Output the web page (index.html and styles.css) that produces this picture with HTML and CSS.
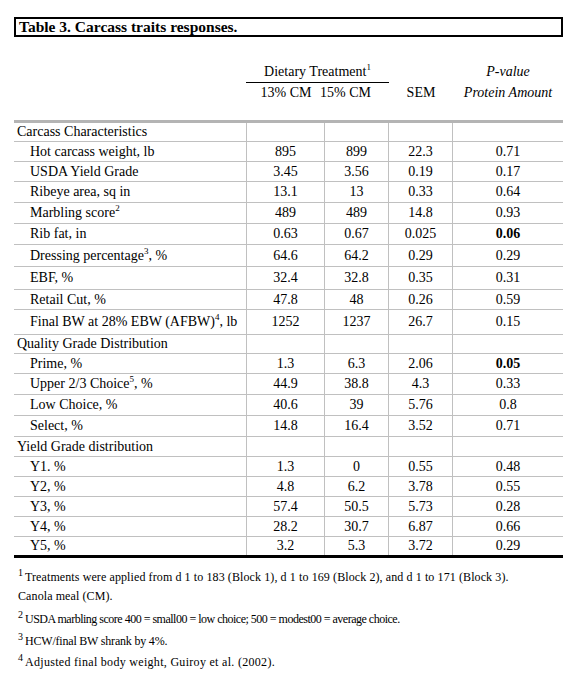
FILE: index.html
```html
<!DOCTYPE html>
<html>
<head>
<meta charset="utf-8">
<link rel="stylesheet" href="styles.css">
</head>
<body>
<div class="page">
  <div class="title">Table 3. Carcass traits responses.</div>

  <div class="head">
    <div class="hrow r1">
      <div class="hc"></div>
      <div class="hc span2">Dietary Treatment<sup>1</sup></div>
      <div class="hc"></div>
      <div class="hc it">P-value</div>
    </div>
    <div class="hrow r2">
      <div class="hc"></div>
      <div class="hc">13% CM</div>
      <div class="hc shift">15% CM</div>
      <div class="hc">SEM</div>
      <div class="hc it">Protein Amount</div>
    </div>
  </div>

  <div class="tbody">
    <div class="row h19 cat"><div class="c lab"><span>Carcass Characteristics</span></div><div class="c"></div><div class="c"></div><div class="c"></div><div class="c"></div></div>
    <div class="row h20"><div class="c lab sub"><span>Hot carcass weight, lb</span></div><div class="c">895</div><div class="c">899</div><div class="c">22.3</div><div class="c">0.71</div></div>
    <div class="row h20"><div class="c lab sub"><span>USDA Yield Grade</span></div><div class="c">3.45</div><div class="c">3.56</div><div class="c">0.19</div><div class="c">0.17</div></div>
    <div class="row h21"><div class="c lab sub"><span>Ribeye area, sq in</span></div><div class="c">13.1</div><div class="c">13</div><div class="c">0.33</div><div class="c">0.64</div></div>
    <div class="row h21"><div class="c lab sub"><span>Marbling score<sup>2</sup></span></div><div class="c">489</div><div class="c">489</div><div class="c">14.8</div><div class="c">0.93</div></div>
    <div class="row h21"><div class="c lab sub"><span>Rib fat, in</span></div><div class="c">0.63</div><div class="c">0.67</div><div class="c">0.025</div><div class="c"><b>0.06</b></div></div>
    <div class="row h22"><div class="c lab sub"><span>Dressing percentage<sup>3</sup>, %</span></div><div class="c">64.6</div><div class="c">64.2</div><div class="c">0.29</div><div class="c">0.29</div></div>
    <div class="row h23"><div class="c lab sub"><span>EBF, %</span></div><div class="c">32.4</div><div class="c">32.8</div><div class="c">0.35</div><div class="c">0.31</div></div>
    <div class="row h20"><div class="c lab sub"><span>Retail Cut, %</span></div><div class="c">47.8</div><div class="c">48</div><div class="c">0.26</div><div class="c">0.59</div></div>
    <div class="row h25"><div class="c lab sub"><span>Final BW at 28% EBW (AFBW)<sup>4</sup>, lb</span></div><div class="c">1252</div><div class="c">1237</div><div class="c">26.7</div><div class="c">0.15</div></div>
    <div class="row h19 cat"><div class="c lab"><span>Quality Grade Distribution</span></div><div class="c"></div><div class="c"></div><div class="c"></div><div class="c"></div></div>
    <div class="row h20"><div class="c lab sub"><span>Prime, %</span></div><div class="c">1.3</div><div class="c">6.3</div><div class="c">2.06</div><div class="c"><b>0.05</b></div></div>
    <div class="row h21"><div class="c lab sub"><span>Upper 2/3 Choice<sup>5</sup>, %</span></div><div class="c">44.9</div><div class="c">38.8</div><div class="c">4.3</div><div class="c">0.33</div></div>
    <div class="row h21"><div class="c lab sub"><span>Low Choice, %</span></div><div class="c">40.6</div><div class="c">39</div><div class="c">5.76</div><div class="c">0.8</div></div>
    <div class="row h21"><div class="c lab sub"><span>Select, %</span></div><div class="c">14.8</div><div class="c">16.4</div><div class="c">3.52</div><div class="c">0.71</div></div>
    <div class="row h20 cat"><div class="c lab"><span>Yield Grade distribution</span></div><div class="c"></div><div class="c"></div><div class="c"></div><div class="c"></div></div>
    <div class="row h20"><div class="c lab sub"><span>Y1. %</span></div><div class="c">1.3</div><div class="c">0</div><div class="c">0.55</div><div class="c">0.48</div></div>
    <div class="row h20"><div class="c lab sub"><span>Y2, %</span></div><div class="c">4.8</div><div class="c">6.2</div><div class="c">3.78</div><div class="c">0.55</div></div>
    <div class="row h20"><div class="c lab sub"><span>Y3, %</span></div><div class="c">57.4</div><div class="c">50.5</div><div class="c">5.73</div><div class="c">0.28</div></div>
    <div class="row h20"><div class="c lab sub"><span>Y4, %</span></div><div class="c">28.2</div><div class="c">30.7</div><div class="c">6.87</div><div class="c">0.66</div></div>
    <div class="row h20 last"><div class="c lab sub"><span>Y5, %</span></div><div class="c">3.2</div><div class="c">5.3</div><div class="c">3.72</div><div class="c">0.29</div></div>
  </div>

  <div class="notes">
    <p class="n1"><sup>1</sup>Treatments were applied from d 1 to 183 (Block 1), d 1 to 169 (Block 2), and d 1 to 171 (Block 3).<br>Canola meal (CM).</p>
    <p class="n2"><sup>2</sup>USDA marbling score 400 = small00 = low choice; 500 = modest00 = average choice.</p>
    <p class="n3"><sup>3</sup>HCW/final BW shrank by 4%.</p>
    <p class="n4"><sup>4</sup>Adjusted final body weight, Guiroy et al. (2002).</p>
  </div>
</div>
</body>
</html>
```

FILE: styles.css
```css
html, body {
  margin: 0;
  padding: 0;
  background: #ffffff;
}

body {
  font-family: "Liberation Serif", "Times New Roman", serif;
  color: #000;
}

.page {
  padding: 17px 0 0 14px;
  width: 549px;
}

.title {
  box-sizing: border-box;
  height: 20px;
  border: 2px solid #000;
  font-weight: bold;
  font-size: 15.5px;
  line-height: 16px;
  padding-left: 3px;
}

.head {
  margin-top: 25px;
  font-size: 14px;
}

.hrow,
.row {
  display: grid;
  grid-template-columns: 233px 78px 64px 64px 110px;
}

.hrow.r1 {
  height: 21px;
}

.hrow.r2 {
  height: 20px;
}

.hc {
  text-align: center;
  line-height: 20px;
  white-space: nowrap;
}

.hc.span2 {
  grid-column: span 2;
  border-bottom: 1px solid #000;
  margin-left: -1px;
}

.hc.shift {
  text-align: left;
  text-indent: -5px;
}

.it {
  font-style: italic;
}

.hc sup,
.c sup {
  font-size: 9px;
  line-height: 0;
  vertical-align: 6px;
}

.tbody {
  margin-top: 17px;
  border-top: 3px solid #b4b4b4;
  font-size: 14px;
}

.row {
  box-sizing: border-box;
  border-bottom: 1px solid #c0c0c0;
}

.row.last {
  border-bottom: 3px solid #000;
}

.h19 { height: 19px; }
.h20 { height: 20px; }
.h21 { height: 21px; }
.h22 { height: 22px; }
.h23 { height: 23px; }
.h25 { height: 25px; }
.row.last.h20 { height: 21px; }

.c {
  border-right: 1px solid #c0c0c0;
  display: flex;
  align-items: center;
  justify-content: center;
  white-space: nowrap;
  line-height: 16px;
}

.c:last-child {
  border-right: none;
}

.c.lab {
  justify-content: flex-start;
  padding-left: 3px;
}

.c.lab.sub {
  padding-left: 16px;
}

.notes {
  font-size: 12px;
  line-height: 19px;
  margin-top: 10px;
  padding-left: 4px;
  letter-spacing: -0.2px;
}

.notes p {
  margin: 0;
}

.notes .n1 {
  letter-spacing: 0.1px;
}

.notes .n2 {
  margin-top: 4px;
  letter-spacing: -0.5px;
}

.notes .n3 {
  margin-top: 3px;
}

.notes .n4 {
  margin-top: 2px;
  letter-spacing: 0.3px;
}

.notes sup {
  font-size: 10px;
  line-height: 0;
  vertical-align: 5px;
  margin-right: 2px;
  letter-spacing: 0;
}
```
